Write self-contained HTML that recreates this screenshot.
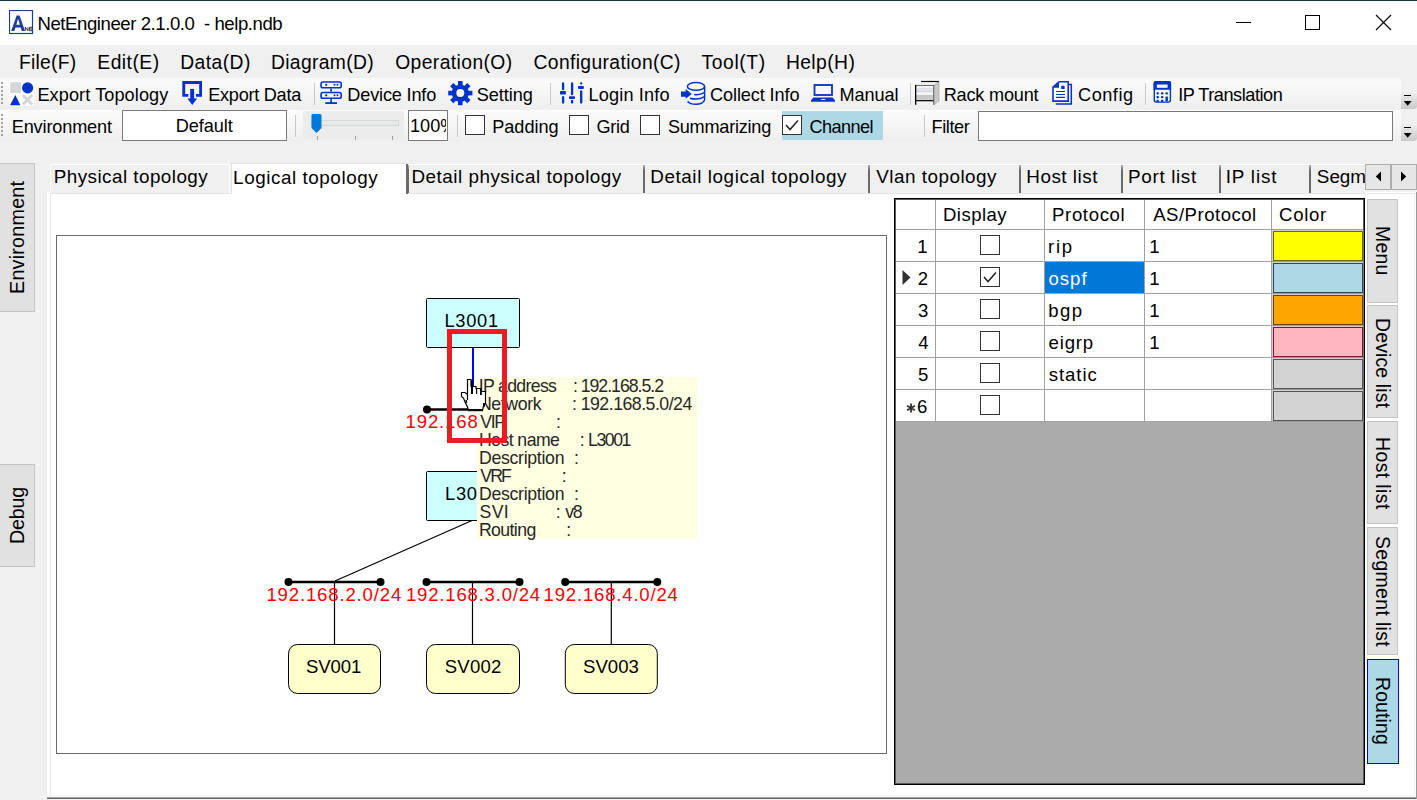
<!DOCTYPE html>
<html><head><meta charset="utf-8"><style>
html,body{margin:0;padding:0;width:1417px;height:800px;overflow:hidden;background:#f0f0f0;position:relative;font-family:"Liberation Sans",sans-serif;}
</style></head><body>
<div style="position:absolute;left:0px;top:0px;width:1417px;height:1px;background:#07363b"></div>
<div style="position:absolute;left:0px;top:1px;width:1417px;height:44px;background:#fff"></div>
<svg style="position:absolute;left:9px;top:10px" width="25" height="25" viewBox="0 0 25 25">
<rect x="0.5" y="0.5" width="23" height="23" fill="#fff" stroke="#1f3d8c" stroke-width="1.2"/>
<path d="M2.2 21 L7.6 5.4 L10.6 5.4 L16 21 L12.8 21 L11.7 17.5 L6.5 17.5 L5.4 21 Z M7.3 14.8 L10.9 14.8 L9.1 8.8 Z" fill="#1f3d9c"/>
<path d="M16.3 20.8 L16.3 17.2 L19 20.8 L19 17.2 M23.5 17.3 L20.6 17.3 L20.6 20.7 L23.5 20.7 M20.6 19 L23 19" fill="none" stroke="#222" stroke-width="0.9"/>
</svg>
<div style="font:400 18.57px/18.57px 'Liberation Sans';color:#000;letter-spacing:-0.429px;white-space:pre;position:absolute;left:37.50px;top:14.78px;">NetEngineer 2.1.0.0  - help.ndb</div>
<div style="position:absolute;left:1236px;top:22px;width:15px;height:1px;background:#000"></div>
<div style="position:absolute;left:1305px;top:15px;width:15px;height:15px;border:1px solid #000;box-sizing:border-box"></div>
<svg style="position:absolute;left:1375px;top:14px" width="17" height="17" viewBox="0 0 17 17"><path d="M1 1 L16 16 M16 1 L1 16" stroke="#000" stroke-width="1.1"/></svg>
<div style="position:absolute;left:0px;top:45px;width:1417px;height:33px;background:#f0f0f0"></div>
<div style="font:400 19.29px/19.29px 'Liberation Sans';color:#000;letter-spacing:0.238px;white-space:pre;position:absolute;left:19.00px;top:52.67px;">File(F)</div>
<div style="font:400 19.29px/19.29px 'Liberation Sans';color:#000;letter-spacing:0.481px;white-space:pre;position:absolute;left:97.30px;top:52.67px;">Edit(E)</div>
<div style="font:400 19.29px/19.29px 'Liberation Sans';color:#000;letter-spacing:0.436px;white-space:pre;position:absolute;left:180.20px;top:52.67px;">Data(D)</div>
<div style="font:400 19.29px/19.29px 'Liberation Sans';color:#000;letter-spacing:0.364px;white-space:pre;position:absolute;left:270.90px;top:52.67px;">Diagram(D)</div>
<div style="font:400 19.29px/19.29px 'Liberation Sans';color:#000;letter-spacing:0.408px;white-space:pre;position:absolute;left:395.20px;top:52.67px;">Operation(O)</div>
<div style="font:400 19.29px/19.29px 'Liberation Sans';color:#000;letter-spacing:0.370px;white-space:pre;position:absolute;left:533.50px;top:52.67px;">Configuration(C)</div>
<div style="font:400 19.29px/19.29px 'Liberation Sans';color:#000;letter-spacing:0.637px;white-space:pre;position:absolute;left:701.40px;top:52.67px;">Tool(T)</div>
<div style="font:400 19.29px/19.29px 'Liberation Sans';color:#000;letter-spacing:0.415px;white-space:pre;position:absolute;left:785.90px;top:52.67px;">Help(H)</div>
<div style="position:absolute;left:0px;top:78px;width:1401px;height:31px;background:linear-gradient(#fbfbfb,#f5f5f5 55%,#eeeeee);border-radius:0 3px 3px 0"></div>
<div style="position:absolute;left:0px;top:110px;width:1401px;height:31px;background:linear-gradient(#fbfbfb,#f5f5f5 55%,#eeeeee);border-radius:0 3px 3px 0"></div>
<div style="position:absolute;left:1px;top:82px;width:2px;height:2px;background:#a0a0a0"></div>
<div style="position:absolute;left:1px;top:86px;width:2px;height:2px;background:#a0a0a0"></div>
<div style="position:absolute;left:1px;top:90px;width:2px;height:2px;background:#a0a0a0"></div>
<div style="position:absolute;left:1px;top:94px;width:2px;height:2px;background:#a0a0a0"></div>
<div style="position:absolute;left:1px;top:98px;width:2px;height:2px;background:#a0a0a0"></div>
<div style="position:absolute;left:1px;top:102px;width:2px;height:2px;background:#a0a0a0"></div>
<div style="position:absolute;left:1px;top:114px;width:2px;height:2px;background:#a0a0a0"></div>
<div style="position:absolute;left:1px;top:118px;width:2px;height:2px;background:#a0a0a0"></div>
<div style="position:absolute;left:1px;top:122px;width:2px;height:2px;background:#a0a0a0"></div>
<div style="position:absolute;left:1px;top:126px;width:2px;height:2px;background:#a0a0a0"></div>
<div style="position:absolute;left:1px;top:130px;width:2px;height:2px;background:#a0a0a0"></div>
<div style="position:absolute;left:1px;top:134px;width:2px;height:2px;background:#a0a0a0"></div>
<div style="position:absolute;left:1401px;top:92px;width:16px;height:17px;background:linear-gradient(#f0f0f0,#c8c8c8);border-radius:0 0 3px 0"></div>
<div style="position:absolute;left:1404px;top:95px;width:7px;height:1px;background:#000"></div>
<svg style="position:absolute;left:1403px;top:101px" width="10" height="6"><path d="M0.8 0 L8.6 0 L4.7 4.8 Z" fill="#000"/></svg>
<div style="position:absolute;left:1401px;top:124px;width:16px;height:17px;background:linear-gradient(#f0f0f0,#c8c8c8);border-radius:0 0 3px 0"></div>
<div style="position:absolute;left:1404px;top:127px;width:7px;height:1px;background:#000"></div>
<svg style="position:absolute;left:1403px;top:133px" width="10" height="6"><path d="M0.8 0 L8.6 0 L4.7 4.8 Z" fill="#000"/></svg>
<div style="position:absolute;left:314px;top:83px;width:1px;height:22px;background:#c8c8c8"></div>
<div style="position:absolute;left:550px;top:83px;width:1px;height:22px;background:#c8c8c8"></div>
<div style="position:absolute;left:910px;top:83px;width:1px;height:22px;background:#c8c8c8"></div>
<div style="position:absolute;left:1145px;top:83px;width:1px;height:22px;background:#c8c8c8"></div>
<div style="position:absolute;left:295px;top:115px;width:1px;height:22px;background:#c8c8c8"></div>
<div style="position:absolute;left:457px;top:115px;width:1px;height:22px;background:#c8c8c8"></div>
<div style="position:absolute;left:924px;top:115px;width:1px;height:22px;background:#c8c8c8"></div>
<div style="font:400 18.14px/18.14px 'Liberation Sans';color:#000;letter-spacing:0.092px;white-space:pre;position:absolute;left:37.40px;top:85.64px;">Export Topology</div>
<div style="font:400 18.14px/18.14px 'Liberation Sans';color:#000;letter-spacing:-0.260px;white-space:pre;position:absolute;left:208.20px;top:85.64px;">Export Data</div>
<div style="font:400 18.14px/18.14px 'Liberation Sans';color:#000;letter-spacing:-0.166px;white-space:pre;position:absolute;left:347.30px;top:85.64px;">Device Info</div>
<div style="font:400 18.14px/18.14px 'Liberation Sans';color:#000;letter-spacing:-0.065px;white-space:pre;position:absolute;left:476.70px;top:85.64px;">Setting</div>
<div style="font:400 18.14px/18.14px 'Liberation Sans';color:#000;letter-spacing:0.156px;white-space:pre;position:absolute;left:588.50px;top:85.64px;">Login Info</div>
<div style="font:400 18.14px/18.14px 'Liberation Sans';color:#000;letter-spacing:-0.105px;white-space:pre;position:absolute;left:710.00px;top:85.64px;">Collect Info</div>
<div style="font:400 18.14px/18.14px 'Liberation Sans';color:#000;letter-spacing:-0.093px;white-space:pre;position:absolute;left:839.60px;top:85.64px;">Manual</div>
<div style="font:400 18.14px/18.14px 'Liberation Sans';color:#000;letter-spacing:-0.194px;white-space:pre;position:absolute;left:943.70px;top:85.64px;">Rack mount</div>
<div style="font:400 18.14px/18.14px 'Liberation Sans';color:#000;letter-spacing:0.510px;white-space:pre;position:absolute;left:1078.10px;top:85.64px;">Config</div>
<div style="font:400 18.14px/18.14px 'Liberation Sans';color:#000;letter-spacing:-0.458px;white-space:pre;position:absolute;left:1178.20px;top:85.64px;">IP Translation</div>
<svg style="position:absolute;left:9px;top:81px" width="25" height="25" viewBox="0 0 25 25">
<rect x="0" y="0" width="25" height="25" rx="1" fill="#fff"/>
<rect x="1.2" y="1.2" width="10.8" height="10.8" fill="#d6d6d6"/>
<circle cx="18.6" cy="6.9" r="5.6" fill="#0033cc"/>
<path d="M1 24.2 L6.3 14 L11.4 24.2 Z" fill="#0033cc"/>
<path d="M13.8 14 L23.2 23.4 M23.2 14 L13.8 23.4" stroke="#d6d6d6" stroke-width="2.8"/>
</svg>
<svg style="position:absolute;left:178px;top:78px" width="30" height="30" viewBox="0 0 30 30">
<path d="M4.3 3 L24 3 L24 18.75 L18 18.75 L18 16.1 L21.2 16.1 L21.2 6 L7.2 6 L7.2 16.1 L10.3 16.1 L10.3 18.75 L4.3 18.75 Z" fill="#0033cc"/>
<rect x="12.2" y="10.9" width="3.9" height="10" fill="#0033cc"/>
<path d="M9.4 20.4 L19.1 20.4 L14.25 27 Z" fill="#0033cc"/>
</svg>
<svg style="position:absolute;left:315px;top:78px" width="30" height="30" viewBox="0 0 30 30">
<g fill="none" stroke="#0033cc" stroke-width="1.6">
<rect x="6.05" y="4" width="20.15" height="5.7" rx="1.8"/>
<rect x="6.05" y="14.5" width="20.15" height="5.7" rx="1.8"/>
<path d="M16.1 10.5 L16.1 13.7 M16.1 21 L16.1 25.5"/>
<path d="M10.3 25.1 L22 25.1" stroke-width="1.8"/>
</g>
<g fill="#0033cc"><circle cx="11.2" cy="6.85" r="1.15"/><circle cx="19.5" cy="6.85" r="1"/><circle cx="22.5" cy="6.85" r="1"/>
<circle cx="11.2" cy="17.35" r="1.15"/><circle cx="19.5" cy="17.35" r="1"/><circle cx="22.5" cy="17.35" r="1"/></g>
</svg>
<svg style="position:absolute;left:448px;top:81px" width="25" height="25" viewBox="0 0 25 25">
<rect x="10" y="0" width="4.6" height="6" transform="rotate(0 12.3 12.1)" fill="#0033cc"/><rect x="10" y="0" width="4.6" height="6" transform="rotate(45 12.3 12.1)" fill="#0033cc"/><rect x="10" y="0" width="4.6" height="6" transform="rotate(90 12.3 12.1)" fill="#0033cc"/><rect x="10" y="0" width="4.6" height="6" transform="rotate(135 12.3 12.1)" fill="#0033cc"/><rect x="10" y="0" width="4.6" height="6" transform="rotate(180 12.3 12.1)" fill="#0033cc"/><rect x="10" y="0" width="4.6" height="6" transform="rotate(225 12.3 12.1)" fill="#0033cc"/><rect x="10" y="0" width="4.6" height="6" transform="rotate(270 12.3 12.1)" fill="#0033cc"/><rect x="10" y="0" width="4.6" height="6" transform="rotate(315 12.3 12.1)" fill="#0033cc"/><circle cx="12.3" cy="12.1" r="8.6" fill="#0033cc"/><circle cx="12.3" cy="12.1" r="4" fill="#f7f7f7"/>
</svg>
<svg style="position:absolute;left:555px;top:78px" width="40" height="30" viewBox="0 0 40 30">
<g stroke="#0033cc" stroke-width="2.3" stroke-linecap="round" fill="none">
<path d="M8.1 5.4 L8.1 11.2 M8.1 19.2 L8.1 24.6 M17.1 5.4 L17.1 16.2 M17.1 23 L17.1 24.6 M26.2 5.4 L26.2 5.6 M26.2 13.4 L26.2 24.6"/>
</g>
<g fill="#0033cc"><rect x="5" y="12.9" width="5.9" height="3.6" rx="0.8"/><rect x="14" y="18.2" width="6" height="2.8" rx="0.8"/><rect x="23" y="7.9" width="5.9" height="3" rx="0.8"/></g>
</svg>
<svg style="position:absolute;left:676px;top:78px" width="36" height="30" viewBox="0 0 36 30">
<g fill="none" stroke="#0033cc" stroke-width="1.5">
<ellipse cx="20" cy="8.4" rx="8.6" ry="3.9"/>
<path d="M28.6 8.4 L28.6 22"/>
<path d="M18.2 16.6 Q24 17.4 28.6 14.4"/>
<path d="M14 20.2 Q22 22.5 28.6 18.6"/>
<path d="M11.6 23.4 Q14 26.2 20 26.2 Q27 26.2 28.6 22"/>
</g>
<path d="M5 13.5 L9.7 13.5 L9.7 11 L15.75 16 L9.7 20.8 L9.7 18.7 L5 18.7 Z" fill="#0033cc"/>
</svg>
<svg style="position:absolute;left:806px;top:78px" width="34" height="30" viewBox="0 0 34 30">
<rect x="8.5" y="7" width="17.5" height="10" fill="none" stroke="#0033cc" stroke-width="1.8"/>
<path d="M7.5 19.5 L26.5 19.5 L29 22.3 L29 23.8 L5 23.8 L5 22.3 Z" fill="#0033cc"/>
<ellipse cx="17.3" cy="21.4" rx="2.3" ry="0.7" fill="#f4f4f4"/>
</svg>
<svg style="position:absolute;left:908px;top:78px" width="36" height="30" viewBox="0 0 36 30">
<path d="M7.5 7.2 L13 3.6 L31 3.6 L25.8 7.2 Z" fill="#f6f6f6"/>
<path d="M25.8 7.2 L31 3.6 L31 23 L25.8 26.8 Z" fill="#c8c8c8" stroke="#9a9a9a" stroke-width="0.6"/>
<rect x="7.5" y="7.2" width="18.3" height="15.3" fill="#f4f4f4"/>
<rect x="8" y="10.3" width="17.5" height="1.2" fill="#dcdcdc"/>
<rect x="8" y="11.5" width="17.5" height="1.8" fill="#d5e2f6"/>
<rect x="8" y="13.3" width="17.5" height="0.8" fill="#d0d0d0"/>
<rect x="8" y="17" width="17.5" height="4.8" fill="#c8c8c8"/>
<rect x="7.5" y="6.9" width="18.5" height="1.1" fill="#707070"/>
<rect x="7" y="7" width="1.3" height="19.8" fill="#000"/>
<rect x="7" y="22" width="19" height="1.3" fill="#111"/>
<rect x="25.2" y="7" width="1" height="19.8" fill="#606060"/>
<rect x="13.1" y="2.9" width="17.8" height="1.2" fill="#000"/>
</svg>
<svg style="position:absolute;left:1046px;top:78px" width="30" height="30" viewBox="0 0 30 30">
<path d="M9.8 26 L25.3 26 L25.3 6.4 L23 6.4" fill="none" stroke="#0033cc" stroke-width="1.5"/>
<path d="M7 9.2 L13.2 3.8 L22.2 3.8 L22.2 23.1 L7 23.1 Z" fill="#fff" stroke="#0033cc" stroke-width="1.6"/>
<path d="M6.6 9.8 L13 3.4 L13 9.8 Z" fill="#0033cc"/>
<rect x="15.2" y="7.8" width="3.4" height="3.3" rx="0.4" fill="#0033cc"/>
<path d="M10.5 13.5 L18.5 13.5 M10.5 16.5 L18.5 16.5 M10.5 19.4 L18.5 19.4" stroke="#0033cc" stroke-width="1.1" stroke-linecap="round"/>
</svg>
<svg style="position:absolute;left:1148px;top:78px" width="30" height="30" viewBox="0 0 30 30">
<rect x="6.3" y="3.7" width="16.1" height="20.4" rx="2" fill="none" stroke="#0033cc" stroke-width="1.4"/>
<path d="M5.6 11.8 L5.6 5 Q5.6 3 7.6 3 L21.1 3 Q23.1 3 23.1 5 L23.1 11.8 Z" fill="#0033cc"/>
<rect x="8.8" y="6.5" width="10.8" height="3.3" fill="#f4f4f4"/>
<g fill="#0033cc"><rect x="8.5" y="14.3" width="2.4" height="2.2" rx="0.8"/><rect x="13" y="14.3" width="2.4" height="2.2" rx="0.8"/><rect x="17.5" y="14.3" width="2.4" height="2.2" rx="0.8"/>
<rect x="8.5" y="18" width="2.4" height="2.2" rx="0.8"/><rect x="13" y="18" width="2.4" height="2.2" rx="0.8"/><rect x="17.5" y="18.4" width="2.4" height="5.2" rx="0.5"/>
<rect x="8.5" y="21.8" width="2.4" height="2.2" rx="0.8"/><rect x="13" y="21.8" width="2.4" height="2.2" rx="0.8"/></g>
</svg>
<div style="font:400 18.14px/18.14px 'Liberation Sans';color:#000;letter-spacing:-0.140px;white-space:pre;position:absolute;left:11.70px;top:117.54px;">Environment</div>
<div style="position:absolute;left:122px;top:110px;width:165px;height:31px;background:#fff;border:1px solid #7a7a7a;box-sizing:border-box"></div>
<div style="font:400 18.14px/18.14px 'Liberation Sans';color:#000;letter-spacing:-0.040px;white-space:pre;position:absolute;left:175.70px;top:117.04px;">Default</div>
<div style="position:absolute;left:303px;top:111px;width:101px;height:29px;background:#ececec"></div>
<div style="position:absolute;left:311px;top:120px;width:88px;height:6px;background:#e7eaea;border:1px solid #d6d6d6;box-sizing:border-box"></div>
<svg style="position:absolute;left:311px;top:114px" width="11" height="19"><path d="M0.5 1.5 Q0.5 0 2 0 L9 0 Q10.5 0 10.5 1.5 L10.5 14 L5.5 19 L0.5 14 Z" fill="#0078d7"/></svg>
<div style="position:absolute;left:317px;top:136px;width:1px;height:4px;background:#a0a0a0"></div>
<div style="position:absolute;left:355px;top:136px;width:1px;height:4px;background:#a0a0a0"></div>
<div style="position:absolute;left:392px;top:136px;width:1px;height:4px;background:#a0a0a0"></div>
<div style="position:absolute;left:408px;top:110px;width:40px;height:31px;background:#fff;border:1px solid #7a7a7a;box-sizing:border-box;overflow:hidden"></div>
<div style="position:absolute;left:409px;top:111px;width:37px;height:29px;overflow:hidden">
<div style="font:400 18.14px/18.14px 'Liberation Sans';color:#000;letter-spacing:0.000px;white-space:pre;position:absolute;left:1.00px;top:5.64px;">100%</div>
</div>
<div style="position:absolute;left:782px;top:111px;width:101px;height:29px;background:#add8e6"></div>
<div style="position:absolute;left:465px;top:115px;width:20px;height:20px;background:#fff;border:1px solid #333;box-sizing:border-box"></div>
<div style="position:absolute;left:569px;top:115px;width:20px;height:20px;background:#fff;border:1px solid #333;box-sizing:border-box"></div>
<div style="position:absolute;left:640px;top:115px;width:20px;height:20px;background:#fff;border:1px solid #333;box-sizing:border-box"></div>
<div style="position:absolute;left:782px;top:115px;width:20px;height:20px;background:#fff;border:1px solid #333;box-sizing:border-box"></div>
<svg style="position:absolute;left:782px;top:115px" width="20" height="20"><path d="M4 10 L8 14.5 L16 5.5" fill="none" stroke="#222" stroke-width="1.5"/></svg>
<div style="font:400 18.14px/18.14px 'Liberation Sans';color:#000;letter-spacing:-0.048px;white-space:pre;position:absolute;left:492.30px;top:117.54px;">Padding</div>
<div style="font:400 18.14px/18.14px 'Liberation Sans';color:#000;letter-spacing:-0.327px;white-space:pre;position:absolute;left:596.50px;top:117.54px;">Grid</div>
<div style="font:400 18.14px/18.14px 'Liberation Sans';color:#000;letter-spacing:-0.236px;white-space:pre;position:absolute;left:667.90px;top:117.54px;">Summarizing</div>
<div style="font:400 18.14px/18.14px 'Liberation Sans';color:#000;letter-spacing:-0.591px;white-space:pre;position:absolute;left:809.60px;top:117.54px;">Channel</div>
<div style="font:400 18.14px/18.14px 'Liberation Sans';color:#000;letter-spacing:-0.434px;white-space:pre;position:absolute;left:931.60px;top:117.54px;">Filter</div>
<div style="position:absolute;left:978px;top:111px;width:415px;height:30px;background:#fff;border:1px solid #7a7a7a;box-sizing:border-box"></div>
<div style="position:absolute;left:0px;top:163px;width:35px;height:149px;background:#e1e1e1;border:1px solid #c4c4c4;border-left:none;box-sizing:border-box"></div>
<div style="font:400 19.71px/19.71px 'Liberation Sans';color:#000;letter-spacing:0.252px;white-space:pre;position:absolute;left:8.31px;top:294.40px;transform:rotate(-90deg);transform-origin:0 0;">Environment</div>
<div style="position:absolute;left:0px;top:464px;width:35px;height:103px;background:#e1e1e1;border:1px solid #c4c4c4;border-left:none;box-sizing:border-box"></div>
<div style="font:400 19.71px/19.71px 'Liberation Sans';color:#000;letter-spacing:-0.231px;white-space:pre;position:absolute;left:8.31px;top:544.40px;transform:rotate(-90deg);transform-origin:0 0;">Debug</div>
<div style="position:absolute;left:47px;top:192px;width:1370px;height:606px;background:#fff;border-left:1px solid #fff;box-sizing:border-box"></div>
<div style="position:absolute;left:50px;top:194px;width:1px;height:601px;background:#e6e6e6"></div>
<div style="position:absolute;left:50px;top:193px;width:1364px;height:1px;background:#e6e6e6"></div>
<div style="position:absolute;left:48px;top:795px;width:1367px;height:1px;background:#f0f0f0"></div>
<div style="position:absolute;left:47px;top:797px;width:1370px;height:1px;background:#a0a0a0"></div>
<div style="position:absolute;left:47px;top:798px;width:1370px;height:1px;background:#696969"></div>
<div style="position:absolute;left:1414px;top:193px;width:1px;height:603px;background:#f0f0f0"></div>
<div style="position:absolute;left:1416px;top:192px;width:1px;height:607px;background:#999"></div>
<div style="position:absolute;left:50px;top:164px;width:180px;height:29px;background:#f0f0f0;border:1px solid #fff;border-bottom:none;box-sizing:border-box"></div>
<div style="position:absolute;left:407px;top:164px;width:237px;height:29px;background:#f0f0f0;border:1px solid #fff;border-bottom:none;box-sizing:border-box"></div>
<div style="position:absolute;left:644px;top:164px;width:225px;height:29px;background:#f0f0f0;border:1px solid #fff;border-bottom:none;box-sizing:border-box"></div>
<div style="position:absolute;left:869px;top:164px;width:151px;height:29px;background:#f0f0f0;border:1px solid #fff;border-bottom:none;box-sizing:border-box"></div>
<div style="position:absolute;left:1020px;top:164px;width:102px;height:29px;background:#f0f0f0;border:1px solid #fff;border-bottom:none;box-sizing:border-box"></div>
<div style="position:absolute;left:1122px;top:164px;width:98px;height:29px;background:#f0f0f0;border:1px solid #fff;border-bottom:none;box-sizing:border-box"></div>
<div style="position:absolute;left:1220px;top:164px;width:90px;height:29px;background:#f0f0f0;border:1px solid #fff;border-bottom:none;box-sizing:border-box"></div>
<div style="position:absolute;left:1310px;top:164px;width:56px;height:29px;background:#f0f0f0;border:1px solid #fff;border-bottom:none;box-sizing:border-box"></div>
<div style="font:400 18.86px/18.86px 'Liberation Sans';color:#000;letter-spacing:0.455px;white-space:pre;position:absolute;left:53.70px;top:167.74px;">Physical topology</div>
<div style="font:400 18.86px/18.86px 'Liberation Sans';color:#000;letter-spacing:0.510px;white-space:pre;position:absolute;left:411.40px;top:167.74px;">Detail physical topology</div>
<div style="font:400 18.86px/18.86px 'Liberation Sans';color:#000;letter-spacing:0.586px;white-space:pre;position:absolute;left:650.20px;top:167.74px;">Detail logical topology</div>
<div style="font:400 18.86px/18.86px 'Liberation Sans';color:#000;letter-spacing:0.505px;white-space:pre;position:absolute;left:876.20px;top:167.74px;">Vlan topology</div>
<div style="font:400 18.86px/18.86px 'Liberation Sans';color:#000;letter-spacing:0.510px;white-space:pre;position:absolute;left:1026.30px;top:167.74px;">Host list</div>
<div style="font:400 18.86px/18.86px 'Liberation Sans';color:#000;letter-spacing:0.647px;white-space:pre;position:absolute;left:1128.10px;top:167.74px;">Port list</div>
<div style="font:400 18.86px/18.86px 'Liberation Sans';color:#000;letter-spacing:0.823px;white-space:pre;position:absolute;left:1225.70px;top:167.74px;">IP list</div>
<div style="position:absolute;left:1311px;top:166px;width:54px;height:26px;overflow:hidden">
<div style="font:400 18.86px/18.86px 'Liberation Sans';color:#000;letter-spacing:0.000px;white-space:pre;position:absolute;left:5.80px;top:1.74px;">Segm</div>
</div>
<div style="position:absolute;left:407px;top:165px;width:2px;height:28px;background:linear-gradient(#b0b0b0,#6a6a6a 20%,#6a6a6a)"></div>
<div style="position:absolute;left:643px;top:165px;width:2px;height:28px;background:linear-gradient(#b0b0b0,#6a6a6a 20%,#6a6a6a)"></div>
<div style="position:absolute;left:868px;top:165px;width:2px;height:28px;background:linear-gradient(#b0b0b0,#6a6a6a 20%,#6a6a6a)"></div>
<div style="position:absolute;left:1019px;top:165px;width:2px;height:28px;background:linear-gradient(#b0b0b0,#6a6a6a 20%,#6a6a6a)"></div>
<div style="position:absolute;left:1121px;top:165px;width:2px;height:28px;background:linear-gradient(#b0b0b0,#6a6a6a 20%,#6a6a6a)"></div>
<div style="position:absolute;left:1219px;top:165px;width:2px;height:28px;background:linear-gradient(#b0b0b0,#6a6a6a 20%,#6a6a6a)"></div>
<div style="position:absolute;left:1309px;top:165px;width:2px;height:28px;background:linear-gradient(#b0b0b0,#6a6a6a 20%,#6a6a6a)"></div>
<div style="position:absolute;left:231px;top:163px;width:176px;height:31px;background:#fff;border:1px solid #e3e3e3;border-bottom:none;box-sizing:border-box"></div>
<div style="position:absolute;left:406px;top:164px;width:2px;height:30px;background:#6a6a6a"></div>
<div style="font:400 18.86px/18.86px 'Liberation Sans';color:#000;letter-spacing:0.550px;white-space:pre;position:absolute;left:233.10px;top:168.74px;">Logical topology</div>
<div style="position:absolute;left:1365px;top:164px;width:26px;height:26px;background:#e6e6e6;border:1px solid #adadad;box-sizing:border-box"></div>
<div style="position:absolute;left:1391px;top:164px;width:26px;height:26px;background:#e6e6e6;border:1px solid #adadad;box-sizing:border-box"></div>
<svg style="position:absolute;left:1375px;top:171px" width="8" height="11"><path d="M6 0.5 L6 10.5 L0.8 5.5 Z" fill="#000"/></svg>
<svg style="position:absolute;left:1400px;top:171px" width="8" height="11"><path d="M1 0.5 L1 10.5 L6.2 5.5 Z" fill="#000"/></svg>
<div style="position:absolute;left:56px;top:235px;width:831px;height:519px;background:#fff;border:1px solid #6a6a6a;box-sizing:border-box"></div>
<div style="position:absolute;left:1367px;top:199px;width:31px;height:104px;background:#e1e1e1;border:1px solid #c4c4c4;box-sizing:border-box"></div>
<div style="font:400 19.43px/19.43px 'Liberation Sans';color:#000;letter-spacing:0.203px;white-space:pre;position:absolute;left:1392.45px;top:226.00px;transform:rotate(90deg);transform-origin:0 0;">Menu</div>
<div style="position:absolute;left:1367px;top:305px;width:31px;height:113px;background:#e1e1e1;border:1px solid #c4c4c4;box-sizing:border-box"></div>
<div style="font:400 19.43px/19.43px 'Liberation Sans';color:#000;letter-spacing:0.158px;white-space:pre;position:absolute;left:1392.45px;top:317.50px;transform:rotate(90deg);transform-origin:0 0;">Device list</div>
<div style="position:absolute;left:1367px;top:421px;width:31px;height:103px;background:#e1e1e1;border:1px solid #c4c4c4;box-sizing:border-box"></div>
<div style="font:400 19.43px/19.43px 'Liberation Sans';color:#000;letter-spacing:0.402px;white-space:pre;position:absolute;left:1392.45px;top:437.20px;transform:rotate(90deg);transform-origin:0 0;">Host list</div>
<div style="position:absolute;left:1367px;top:527px;width:31px;height:128px;background:#e1e1e1;border:1px solid #c4c4c4;box-sizing:border-box"></div>
<div style="font:400 19.43px/19.43px 'Liberation Sans';color:#000;letter-spacing:0.346px;white-space:pre;position:absolute;left:1392.45px;top:536.20px;transform:rotate(90deg);transform-origin:0 0;">Segment list</div>
<div style="position:absolute;left:1367px;top:659px;width:32px;height:105px;background:#add8e6;border:1px solid #0000ff;box-sizing:border-box"></div>
<div style="font:400 19.43px/19.43px 'Liberation Sans';color:#000;letter-spacing:0.124px;white-space:pre;position:absolute;left:1391.95px;top:677.00px;transform:rotate(90deg);transform-origin:0 0;">Routing</div>
<div style="position:absolute;left:894px;top:198px;width:471px;height:587px;background:#ababab;border:1px solid #000;box-shadow:inset 0 0 0 1px #5a5a5a;box-sizing:border-box"></div>
<div style="position:absolute;left:896px;top:200px;width:467px;height:221px;background:#fff"></div>
<div style="position:absolute;left:935px;top:200px;width:1px;height:221px;background:#a0a0a0"></div>
<div style="position:absolute;left:1044px;top:200px;width:1px;height:221px;background:#a0a0a0"></div>
<div style="position:absolute;left:1144px;top:200px;width:1px;height:221px;background:#a0a0a0"></div>
<div style="position:absolute;left:1271px;top:200px;width:1px;height:221px;background:#a0a0a0"></div>
<div style="position:absolute;left:896px;top:229px;width:467px;height:1px;background:#a0a0a0"></div>
<div style="position:absolute;left:896px;top:261px;width:467px;height:1px;background:#a0a0a0"></div>
<div style="position:absolute;left:896px;top:293px;width:467px;height:1px;background:#a0a0a0"></div>
<div style="position:absolute;left:896px;top:325px;width:467px;height:1px;background:#a0a0a0"></div>
<div style="position:absolute;left:896px;top:357px;width:467px;height:1px;background:#a0a0a0"></div>
<div style="position:absolute;left:896px;top:389px;width:467px;height:1px;background:#a0a0a0"></div>
<div style="position:absolute;left:896px;top:421px;width:467px;height:1px;background:#a0a0a0"></div>
<div style="font:400 18.57px/18.57px 'Liberation Sans';color:#000;letter-spacing:0.483px;white-space:pre;position:absolute;left:942.90px;top:206.18px;">Display</div>
<div style="font:400 18.57px/18.57px 'Liberation Sans';color:#000;letter-spacing:0.657px;white-space:pre;position:absolute;left:1052.00px;top:206.18px;">Protocol</div>
<div style="font:400 18.57px/18.57px 'Liberation Sans';color:#000;letter-spacing:0.497px;white-space:pre;position:absolute;left:1153.20px;top:206.18px;">AS/Protocol</div>
<div style="font:400 18.57px/18.57px 'Liberation Sans';color:#000;letter-spacing:0.702px;white-space:pre;position:absolute;left:1279.10px;top:206.18px;">Color</div>
<div style="font:400 18.57px/18.57px 'Liberation Sans';color:#000;letter-spacing:0.000px;white-space:pre;position:absolute;left:917.30px;top:237.78px;">1</div>
<div style="position:absolute;left:980px;top:235px;width:20px;height:20px;background:#fff;border:1px solid #333;box-sizing:border-box"></div>
<div style="font:400 18.57px/18.57px 'Liberation Sans';color:#000;letter-spacing:1.695px;white-space:pre;position:absolute;left:1048.10px;top:237.78px;">rip</div>
<div style="font:400 18.57px/18.57px 'Liberation Sans';color:#000;letter-spacing:0.000px;white-space:pre;position:absolute;left:1149.20px;top:237.78px;">1</div>
<div style="position:absolute;left:1273px;top:231px;width:90px;height:30px;background:#ffff00;border:1px solid #6b6b00;box-sizing:border-box;outline:1px solid rgba(150,150,150,0.45)"></div>
<div style="position:absolute;left:1045px;top:262px;width:99px;height:31px;background:#0078d7"></div>
<div style="font:400 18.57px/18.57px 'Liberation Sans';color:#000;letter-spacing:0.000px;white-space:pre;position:absolute;left:917.80px;top:269.78px;">2</div>
<svg style="position:absolute;left:902px;top:270px" width="9" height="15"><path d="M0.5 0 L8.5 7.5 L0.5 15 Z" fill="#333"/></svg>
<div style="position:absolute;left:980px;top:267px;width:20px;height:20px;background:#fff;border:1px solid #333;box-sizing:border-box"></div>
<svg style="position:absolute;left:980px;top:267px" width="20" height="20"><path d="M4 10 L8 14.5 L16 5.5" fill="none" stroke="#222" stroke-width="1.5"/></svg>
<div style="font:400 18.57px/18.57px 'Liberation Sans';color:#fff;letter-spacing:0.953px;white-space:pre;position:absolute;left:1048.60px;top:269.78px;">ospf</div>
<div style="font:400 18.57px/18.57px 'Liberation Sans';color:#000;letter-spacing:0.000px;white-space:pre;position:absolute;left:1149.20px;top:269.78px;">1</div>
<div style="position:absolute;left:1273px;top:263px;width:90px;height:30px;background:#add8e6;border:1px solid #2c4a55;box-sizing:border-box;outline:1px solid rgba(150,150,150,0.45)"></div>
<div style="font:400 18.57px/18.57px 'Liberation Sans';color:#000;letter-spacing:0.000px;white-space:pre;position:absolute;left:918.00px;top:301.78px;">3</div>
<div style="position:absolute;left:980px;top:299px;width:20px;height:20px;background:#fff;border:1px solid #333;box-sizing:border-box"></div>
<div style="font:400 18.57px/18.57px 'Liberation Sans';color:#000;letter-spacing:1.472px;white-space:pre;position:absolute;left:1048.20px;top:301.78px;">bgp</div>
<div style="font:400 18.57px/18.57px 'Liberation Sans';color:#000;letter-spacing:0.000px;white-space:pre;position:absolute;left:1149.20px;top:301.78px;">1</div>
<div style="position:absolute;left:1273px;top:295px;width:90px;height:30px;background:#ffa500;border:1px solid #6b4500;box-sizing:border-box;outline:1px solid rgba(150,150,150,0.45)"></div>
<div style="font:400 18.57px/18.57px 'Liberation Sans';color:#000;letter-spacing:0.000px;white-space:pre;position:absolute;left:918.30px;top:333.78px;">4</div>
<div style="position:absolute;left:980px;top:331px;width:20px;height:20px;background:#fff;border:1px solid #333;box-sizing:border-box"></div>
<div style="font:400 18.57px/18.57px 'Liberation Sans';color:#000;letter-spacing:0.809px;white-space:pre;position:absolute;left:1048.60px;top:333.78px;">eigrp</div>
<div style="font:400 18.57px/18.57px 'Liberation Sans';color:#000;letter-spacing:0.000px;white-space:pre;position:absolute;left:1149.20px;top:333.78px;">1</div>
<div style="position:absolute;left:1273px;top:327px;width:90px;height:30px;background:#ffb6c1;border:1px solid #8b1030;box-sizing:border-box;outline:1px solid rgba(150,150,150,0.45)"></div>
<div style="font:400 18.57px/18.57px 'Liberation Sans';color:#000;letter-spacing:0.000px;white-space:pre;position:absolute;left:918.00px;top:365.78px;">5</div>
<div style="position:absolute;left:980px;top:363px;width:20px;height:20px;background:#fff;border:1px solid #333;box-sizing:border-box"></div>
<div style="font:400 18.57px/18.57px 'Liberation Sans';color:#000;letter-spacing:0.928px;white-space:pre;position:absolute;left:1048.80px;top:365.78px;">static</div>
<div style="position:absolute;left:1273px;top:359px;width:90px;height:30px;background:#d3d3d3;border:1px solid #555;box-sizing:border-box;outline:1px solid rgba(150,150,150,0.45)"></div>
<div style="font:400 18.57px/18.57px 'Liberation Sans';color:#000;letter-spacing:0.000px;white-space:pre;position:absolute;left:917.10px;top:397.78px;">6</div>
<svg style="position:absolute;left:906px;top:403px" width="10" height="10" viewBox="0 0 10 10"><path d="M5 0.5 L5 9.5 M1 2.7 L9 7.3 M9 2.7 L1 7.3" stroke="#333" stroke-width="1.8"/></svg>
<div style="position:absolute;left:980px;top:395px;width:20px;height:20px;background:#fff;border:1px solid #333;box-sizing:border-box"></div>
<div style="position:absolute;left:1273px;top:391px;width:90px;height:30px;background:#d3d3d3;border:1px solid #555;box-sizing:border-box;outline:1px solid rgba(150,150,150,0.45)"></div>
<svg style="position:absolute;left:0;top:0" width="1417" height="800" viewBox="0 0 1417 800">
<rect x="426.5" y="298.5" width="93" height="49" rx="1" fill="#ccffff" stroke="#000" stroke-width="1"/>
<rect x="426.5" y="471.5" width="93" height="49" rx="1" fill="#ccffff" stroke="#000" stroke-width="1"/>
<line x1="473" y1="348" x2="473" y2="392" stroke="#0000ff" stroke-width="2"/>
<line x1="427" y1="409.5" x2="519" y2="409.5" stroke="#000" stroke-width="2.6"/>
<circle cx="427" cy="409.5" r="4" fill="#000"/><circle cx="519" cy="409.5" r="4" fill="#000"/>
<line x1="472" y1="520.5" x2="335" y2="581" stroke="#000" stroke-width="1.2"/>
<line x1="288.5" y1="582" x2="380.5" y2="582" stroke="#000" stroke-width="2.6"/>
<line x1="426.5" y1="582" x2="519.5" y2="582" stroke="#000" stroke-width="2.6"/>
<line x1="565.2" y1="582" x2="657.3" y2="582" stroke="#000" stroke-width="2.6"/>
<g fill="#000"><circle cx="288.5" cy="582" r="4"/><circle cx="380.5" cy="582" r="4"/><circle cx="426.5" cy="582" r="4"/><circle cx="519.5" cy="582" r="4"/><circle cx="565.2" cy="582" r="4"/><circle cx="657.3" cy="582" r="4"/></g>
<line x1="334.5" y1="582" x2="334.5" y2="644.5" stroke="#000" stroke-width="1.2"/>
<line x1="472.5" y1="582" x2="472.5" y2="644.5" stroke="#000" stroke-width="1.2"/>
<line x1="611.3" y1="582" x2="611.3" y2="644.5" stroke="#000" stroke-width="1.2"/>
<rect x="288.5" y="644.5" width="92" height="49" rx="9" fill="#ffffcc" stroke="#000" stroke-width="1"/>
<rect x="426.5" y="644.5" width="93" height="49" rx="9" fill="#ffffcc" stroke="#000" stroke-width="1"/>
<rect x="565.3" y="644.5" width="92" height="49" rx="9" fill="#ffffcc" stroke="#000" stroke-width="1"/>
</svg>
<div style="font:400 18.29px/18.29px 'Liberation Sans';color:#000;letter-spacing:0.706px;white-space:pre;position:absolute;left:444.50px;top:311.52px;">L3001</div>
<div style="font:400 18.29px/18.29px 'Liberation Sans';color:#000;letter-spacing:0.706px;white-space:pre;position:absolute;left:445.10px;top:484.52px;">L3002</div>
<div style="font:400 18.57px/18.57px 'Liberation Sans';color:#ff0000;letter-spacing:0.847px;white-space:pre;position:absolute;left:405.60px;top:413.28px;">192.168.5.0/24</div>
<div style="font:400 18.57px/18.57px 'Liberation Sans';color:#ff0000;letter-spacing:0.847px;white-space:pre;position:absolute;left:266.40px;top:586.28px;">192.168.2.0/24</div>
<div style="font:400 18.57px/18.57px 'Liberation Sans';color:#ff0000;letter-spacing:0.793px;white-space:pre;position:absolute;left:406.00px;top:586.28px;">192.168.3.0/24</div>
<div style="font:400 18.57px/18.57px 'Liberation Sans';color:#ff0000;letter-spacing:0.801px;white-space:pre;position:absolute;left:543.60px;top:586.28px;">192.168.4.0/24</div>
<div style="font:400 18.57px/18.57px 'Liberation Sans';color:#000;letter-spacing:-0.132px;white-space:pre;position:absolute;left:306.00px;top:658.08px;">SV001</div>
<div style="font:400 18.57px/18.57px 'Liberation Sans';color:#000;letter-spacing:0.243px;white-space:pre;position:absolute;left:444.70px;top:658.08px;">SV002</div>
<div style="font:400 18.57px/18.57px 'Liberation Sans';color:#000;letter-spacing:0.043px;white-space:pre;position:absolute;left:583.00px;top:658.08px;">SV003</div>
<div style="position:absolute;left:477px;top:377px;width:220px;height:162px;background:#ffffe1"></div>
<div style="font:400 17.71px/17.71px 'Liberation Sans';color:#262626;letter-spacing:-0.668px;white-space:pre;position:absolute;left:478.70px;top:378.00px;">IP address</div>
<div style="font:400 17.71px/17.71px 'Liberation Sans';color:#262626;letter-spacing:0.000px;white-space:pre;position:absolute;left:573.00px;top:378.00px;">:</div>
<div style="font:400 17.71px/17.71px 'Liberation Sans';color:#262626;letter-spacing:-1.002px;white-space:pre;position:absolute;left:580.70px;top:378.00px;">192.168.5.2</div>
<div style="font:400 17.71px/17.71px 'Liberation Sans';color:#262626;letter-spacing:-0.351px;white-space:pre;position:absolute;left:478.90px;top:396.00px;">Network</div>
<div style="font:400 17.71px/17.71px 'Liberation Sans';color:#262626;letter-spacing:0.000px;white-space:pre;position:absolute;left:571.90px;top:396.00px;">:</div>
<div style="font:400 17.71px/17.71px 'Liberation Sans';color:#262626;letter-spacing:-0.496px;white-space:pre;position:absolute;left:580.70px;top:396.00px;">192.168.5.0/24</div>
<div style="font:400 17.71px/17.71px 'Liberation Sans';color:#262626;letter-spacing:-1.318px;white-space:pre;position:absolute;left:480.30px;top:414.00px;">VIP</div>
<div style="font:400 17.71px/17.71px 'Liberation Sans';color:#262626;letter-spacing:0.000px;white-space:pre;position:absolute;left:556.10px;top:414.00px;">:</div>
<div style="font:400 17.71px/17.71px 'Liberation Sans';color:#262626;letter-spacing:-0.562px;white-space:pre;position:absolute;left:478.90px;top:432.00px;">Host name</div>
<div style="font:400 17.71px/17.71px 'Liberation Sans';color:#262626;letter-spacing:0.000px;white-space:pre;position:absolute;left:579.70px;top:432.00px;">:</div>
<div style="font:400 17.71px/17.71px 'Liberation Sans';color:#262626;letter-spacing:-1.451px;white-space:pre;position:absolute;left:588.00px;top:432.00px;">L3001</div>
<div style="font:400 17.71px/17.71px 'Liberation Sans';color:#262626;letter-spacing:-0.285px;white-space:pre;position:absolute;left:478.90px;top:450.00px;">Description</div>
<div style="font:400 17.71px/17.71px 'Liberation Sans';color:#262626;letter-spacing:0.000px;white-space:pre;position:absolute;left:574.10px;top:450.00px;">:</div>
<div style="font:400 17.71px/17.71px 'Liberation Sans';color:#262626;letter-spacing:-1.903px;white-space:pre;position:absolute;left:480.30px;top:468.00px;">VRF</div>
<div style="font:400 17.71px/17.71px 'Liberation Sans';color:#262626;letter-spacing:0.000px;white-space:pre;position:absolute;left:561.70px;top:468.00px;">:</div>
<div style="font:400 17.71px/17.71px 'Liberation Sans';color:#262626;letter-spacing:-0.285px;white-space:pre;position:absolute;left:478.90px;top:486.00px;">Description</div>
<div style="font:400 17.71px/17.71px 'Liberation Sans';color:#262626;letter-spacing:0.000px;white-space:pre;position:absolute;left:574.10px;top:486.00px;">:</div>
<div style="font:400 17.71px/17.71px 'Liberation Sans';color:#262626;letter-spacing:0.336px;white-space:pre;position:absolute;left:479.50px;top:504.00px;">SVI</div>
<div style="font:400 17.71px/17.71px 'Liberation Sans';color:#262626;letter-spacing:0.000px;white-space:pre;position:absolute;left:555.70px;top:504.00px;">:</div>
<div style="font:400 17.71px/17.71px 'Liberation Sans';color:#262626;letter-spacing:-1.456px;white-space:pre;position:absolute;left:565.30px;top:504.00px;">v8</div>
<div style="font:400 17.71px/17.71px 'Liberation Sans';color:#262626;letter-spacing:-0.600px;white-space:pre;position:absolute;left:478.90px;top:522.00px;">Routing</div>
<div style="font:400 17.71px/17.71px 'Liberation Sans';color:#262626;letter-spacing:0.000px;white-space:pre;position:absolute;left:566.20px;top:522.00px;">:</div>
<div style="position:absolute;left:447px;top:329px;width:60px;height:114px;border:5px solid #ed1c24;box-sizing:border-box"></div>
<svg style="position:absolute;left:458px;top:376px" width="32" height="38" viewBox="0 0 32 38">
<path d="M9.5 24 L9.5 3.5 L13 3.5 L13 10.5 L18 10.5 L18 12.5 L22.5 12.5 L22.5 15.5 L27.5 15.5 L27.5 27 L25.5 30 L24.5 34.5 L10.5 34.5 L9.5 31 L7 26 L5.5 22 L3.5 20.5 L3.5 16.5 L7 16.5 L9.5 18.5" fill="#fff" stroke="#000" stroke-width="1.2"/>
<rect x="13" y="4" width="2" height="14" fill="#000"/>
<rect x="18" y="12" width="1.2" height="6" fill="#000"/>
<rect x="22" y="13" width="1.8" height="6" fill="#000"/>
<rect x="10" y="33" width="15" height="2.2" fill="#000"/>
<rect x="25" y="27" width="1.8" height="4" fill="#000"/>
<rect x="7.5" y="24" width="1.6" height="3" fill="#000"/>
</svg>
</body></html>
